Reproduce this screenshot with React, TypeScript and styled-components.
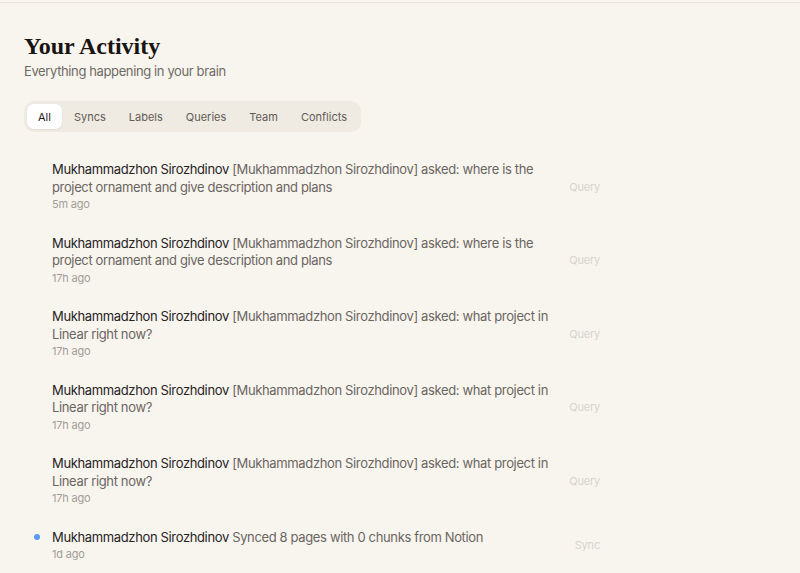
import React, { useState } from "react";
import styled, { createGlobalStyle } from "styled-components";

const GlobalStyle = createGlobalStyle`
  html, body {
    margin: 0;
    padding: 0;
    background: #f8f5ef;
  }
  body {
    font-family: Inter, "Noto Sans", sans-serif;
    -webkit-font-smoothing: antialiased;
  }
  * { box-sizing: border-box; }
`;

const TopEdge = styled.div`
  height: 3px;
  border-bottom: 1px solid #e7e1d9;
`;

const Main = styled.main`
  padding: 29px 24px 0;
`;

const Title = styled.h1`
  margin: 0;
  font-family: "Liberation Serif", "DejaVu Serif", serif;
  font-weight: 700;
  font-size: 24px;
  line-height: 29px;
  color: #181412;
`;

const Subtitle = styled.p`
  margin: 1px 0 0;
  font-size: 13px;
  line-height: 18px;
  letter-spacing: -0.38px;
  color: #6f6a64;
`;

const Tabs = styled.div`
  display: inline-flex;
  gap: 1px;
  margin-top: 21px;
  padding: 3px;
  border-radius: 10px;
  background: #efeae2;
`;

const Tab = styled.button<{ $active?: boolean }>`
  border: none;
  cursor: pointer;
  height: 25px;
  padding: 0 11px;
  border-radius: 7px;
  font-family: inherit;
  font-size: 11px;
  color: ${(p) => (p.$active ? "#1f1b18" : "#625c56")};
  background: ${(p) => (p.$active ? "#ffffff" : "transparent")};
  box-shadow: ${(p) => (p.$active ? "0 1px 2px rgba(60, 40, 20, 0.06)" : "none")};
`;

const List = styled.ul`
  list-style: none;
  margin: 17px 0 0;
  padding: 0;
  max-width: 588px;
`;

const Row = styled.li`
  display: flex;
  align-items: center;
  gap: 12px;
  padding: 12px 12px 10.5px 10px;
`;

/* Unread marker sits level with the first line of the message */
const DotSlot = styled.span`
  flex: 0 0 6px;
  align-self: flex-start;
  height: 17.5px;
  display: flex;
  align-items: center;
  justify-content: center;
`;

const Dot = styled.span<{ $show?: boolean }>`
  width: 6px;
  height: 6px;
  border-radius: 50%;
  background: ${(p) => (p.$show ? "#5b9bf0" : "transparent")};
`;

const Body = styled.div`
  flex: 1;
  min-width: 0;
`;

const Message = styled.div`
  font-size: 13px;
  line-height: 17.5px;
  letter-spacing: -0.36px;
  color: #6b655f;
`;

const Actor = styled.span`
  color: #27231f;
`;

const Time = styled.div`
  font-size: 11px;
  line-height: 16px;
  letter-spacing: -0.2px;
  color: #a39d96;
`;

const Kind = styled.span`
  flex: 0 0 auto;
  font-size: 11px;
  letter-spacing: -0.2px;
  color: #d8d3cc;
`;

type Item = {
  actor: string;
  text: string;
  time: string;
  kind: string;
  unread?: boolean;
};

const items: Item[] = [
  {
    actor: "Mukhammadzhon Sirozhdinov",
    text: "[Mukhammadzhon Sirozhdinov] asked: where is the project ornament and give description and plans",
    time: "5m ago",
    kind: "Query",
  },
  {
    actor: "Mukhammadzhon Sirozhdinov",
    text: "[Mukhammadzhon Sirozhdinov] asked: where is the project ornament and give description and plans",
    time: "17h ago",
    kind: "Query",
  },
  {
    actor: "Mukhammadzhon Sirozhdinov",
    text: "[Mukhammadzhon Sirozhdinov] asked: what project in Linear right now?",
    time: "17h ago",
    kind: "Query",
  },
  {
    actor: "Mukhammadzhon Sirozhdinov",
    text: "[Mukhammadzhon Sirozhdinov] asked: what project in Linear right now?",
    time: "17h ago",
    kind: "Query",
  },
  {
    actor: "Mukhammadzhon Sirozhdinov",
    text: "[Mukhammadzhon Sirozhdinov] asked: what project in Linear right now?",
    time: "17h ago",
    kind: "Query",
  },
  {
    actor: "Mukhammadzhon Sirozhdinov",
    text: "Synced 8 pages with 0 chunks from Notion",
    time: "1d ago",
    kind: "Sync",
    unread: true,
  },
];

const tabs = ["All", "Syncs", "Labels", "Queries", "Team", "Conflicts"];

export default function App() {
  const [active, setActive] = useState("All");
  return (
    <>
      <GlobalStyle />
      <TopEdge />
      <Main>
        <Title>Your Activity</Title>
        <Subtitle>Everything happening in your brain</Subtitle>
        <Tabs>
          {tabs.map((t) => (
            <Tab key={t} $active={t === active} onClick={() => setActive(t)}>
              {t}
            </Tab>
          ))}
        </Tabs>
        <List>
          {items.map((it, i) => (
            <Row key={i}>
              <DotSlot>
                <Dot $show={it.unread} />
              </DotSlot>
              <Body>
                <Message>
                  <Actor>{it.actor}</Actor> {it.text}
                </Message>
                <Time>{it.time}</Time>
              </Body>
              <Kind>{it.kind}</Kind>
            </Row>
          ))}
        </List>
      </Main>
    </>
  );
}
